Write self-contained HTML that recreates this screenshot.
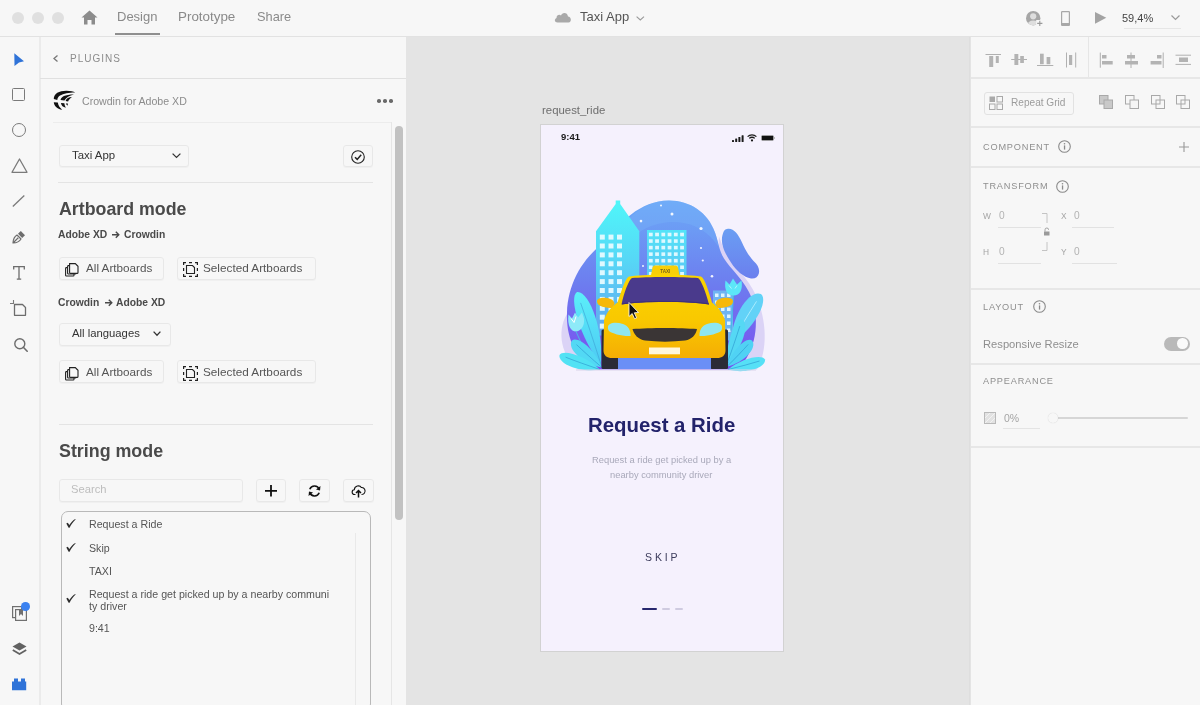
<!DOCTYPE html>
<html><head><meta charset="utf-8"><title>Adobe XD - Taxi App</title>
<style>
html,body{margin:0;padding:0;width:1200px;height:705px;overflow:hidden;background:#f5f5f5;}
body{position:relative;font-family:"Liberation Sans",sans-serif;}
.t{position:absolute;white-space:nowrap;}
body>*{will-change:transform}
svg{overflow:visible}
</style></head><body>
<div style="position:absolute;left:0px;top:0px;width:1200px;height:36px;background:#f7f7f7"></div>
<div style="position:absolute;left:0px;top:36px;width:1200px;height:1px;background:#e2e2e2"></div>
<div style="position:absolute;left:0px;top:37px;width:40px;height:668px;background:#f7f7f7"></div>
<div style="position:absolute;left:39px;top:37px;width:2px;height:668px;background:#ebebeb"></div>
<div style="position:absolute;left:41px;top:37px;width:365px;height:668px;background:#f7f7f7"></div>
<div style="position:absolute;left:406px;top:37px;width:565px;height:668px;background:#e4e4e4"></div>
<div style="position:absolute;left:969px;top:37px;width:1px;height:668px;background:#dedede"></div>
<div style="position:absolute;left:971px;top:37px;width:229px;height:668px;background:#f7f7f7"></div>
<div style="position:absolute;left:12px;top:12px;width:12px;height:12px;border-radius:50%;background:#e0e0e0"></div>
<div style="position:absolute;left:31.5px;top:12px;width:12px;height:12px;border-radius:50%;background:#e0e0e0"></div>
<div style="position:absolute;left:51.5px;top:12px;width:12px;height:12px;border-radius:50%;background:#e0e0e0"></div>
<svg style="position:absolute;left:81px;top:10px;" width="17" height="15" viewBox="0 0 17 15"><path d="M8.5 0.5 L16.5 7.5 L14 7.5 L14 14.5 L10.5 14.5 L10.5 10 L6.5 10 L6.5 14.5 L3 14.5 L3 7.5 L0.5 7.5 Z" fill="#8c8c8c"/></svg>
<div class="t" style="left:117px;top:9.73px;font-size:13px;line-height:14.94px;color:#8a8a8a;font-weight:normal;letter-spacing:0px;">Design</div>
<div style="position:absolute;left:115px;top:33px;width:45px;height:2px;background:#8f8f8f"></div>
<div class="t" style="left:177.5px;top:9.36px;font-size:13.4px;line-height:15.40px;color:#8a8a8a;font-weight:normal;letter-spacing:0px;">Prototype</div>
<div class="t" style="left:256.5px;top:9.91px;font-size:12.8px;line-height:14.71px;color:#8a8a8a;font-weight:normal;letter-spacing:0px;">Share</div>
<svg style="position:absolute;left:554px;top:12px;" width="18" height="11" viewBox="0 0 18 11"><path d="M3.5 10.5 C0.5 10.5 0 7 2.5 6 C2.5 3 5.5 2 7 3.5 C8 0 13.5 0 14 4.5 C17.5 4.5 18 10.5 14.5 10.5 Z" fill="#a9a9a9"/></svg>
<div class="t" style="left:580px;top:9.53px;font-size:13px;line-height:14.94px;color:#555555;font-weight:normal;letter-spacing:0px;">Taxi App</div>
<svg style="position:absolute;left:636px;top:15.8px;" width="9" height="5" viewBox="0 0 9 5"><path d="M0.6 0.6 L4.3 4 L8 0.6" fill="none" stroke="#9a9a9a" stroke-width="1.1"/></svg>
<svg style="position:absolute;left:1020px;top:5px" width="30" height="25" viewBox="1020 5 30 25"><defs><clipPath id="cu"><circle cx="1033.2" cy="18.2" r="7.2"/></clipPath></defs><circle cx="1033.2" cy="18.2" r="7.2" fill="#a6a6a6"/><g clip-path="url(#cu)" fill="#dedede"><circle cx="1033.2" cy="16.3" r="3.1"/><ellipse cx="1033.2" cy="25.2" rx="6" ry="4.6"/></g><rect x="1036.2" y="20" width="7" height="7" fill="#f7f7f7"/><path d="M1039.8 20.8 V26 M1037.2 23.4 H1042.4" stroke="#9a9a9a" stroke-width="1.1"/></svg>
<svg style="position:absolute;left:1061px;top:10.5px;" width="9" height="15" viewBox="0 0 9 15"><rect x="0.6" y="0.6" width="7.8" height="13.8" rx="0.6" fill="none" stroke="#a8a8a8" stroke-width="1.2"/><rect x="0.6" y="12" width="7.8" height="2.4" fill="#a8a8a8"/></svg>
<svg style="position:absolute;left:1095px;top:12px;" width="12" height="12" viewBox="0 0 12 12"><path d="M0 0 L11.3 5.85 L0 11.7 Z" fill="#a3a3a3"/></svg>
<div class="t" style="left:1122px;top:11.57px;font-size:11px;line-height:12.64px;color:#444444;font-weight:normal;letter-spacing:0px;">59,4%</div>
<svg style="position:absolute;left:1171px;top:15px;" width="9" height="5" viewBox="0 0 9 5"><path d="M0.5 0.5 L4.5 4.5 L8.5 0.5" fill="none" stroke="#9a9a9a" stroke-width="1.2"/></svg>
<div style="position:absolute;left:1124px;top:28px;width:57px;height:1px;background:#e6e6e6"></div>
<svg style="position:absolute;left:14px;top:52.5px;" width="11" height="14" viewBox="0 0 11 14"><path d="M0.3 0.3 L10 8.3 L5 9.5 L0.5 13 Z" fill="#2f73d8"/></svg>
<div style="position:absolute;left:12px;top:88px;width:13px;height:13px;box-sizing:border-box;border:1.3px solid #7a7a7a;border-radius:1.5px"></div>
<div style="position:absolute;left:11.5px;top:123px;width:14px;height:14px;box-sizing:border-box;border:1.3px solid #7a7a7a;border-radius:50%"></div>
<svg style="position:absolute;left:11px;top:158px;" width="17" height="15" viewBox="0 0 17 15"><path d="M8.5 1 L16 14.3 L1 14.3 Z" fill="none" stroke="#7a7a7a" stroke-width="1.3" stroke-linejoin="round"/></svg>
<svg style="position:absolute;left:12px;top:195px;" width="13" height="12" viewBox="0 0 13 12"><path d="M0.8 11.5 L12.3 0.5" stroke="#7a7a7a" stroke-width="1.3"/></svg>
<svg style="position:absolute;left:12px;top:229.5px;" width="14" height="14" viewBox="0 0 14 14"><path d="M1 13 C1.2 9 2.5 6.5 5 5 L9 9 C7.5 11.5 5 12.8 1 13 Z M1 13 L5 9" fill="none" stroke="#6d6d6d" stroke-width="1.2" stroke-linejoin="round"/><path d="M6 3.8 L8.8 1 L13 5.2 L10.2 8 Z" fill="#6d6d6d"/><circle cx="5.6" cy="8.4" r="0.9" fill="#6d6d6d"/></svg>
<svg style="position:absolute;left:13px;top:265.5px;" width="12" height="14" viewBox="0 0 12 14"><path d="M0.7 3.5 V0.7 H11.3 V3.5 M6 0.7 V13.2 M3.8 13.2 H8.2" fill="none" stroke="#6d6d6d" stroke-width="1.3"/></svg>
<svg style="position:absolute;left:10px;top:300px;" width="17" height="16" viewBox="0 0 17 16"><path d="M0 3.5 H4 M3.5 0 V4" stroke="#7a7a7a" stroke-width="1.1"/><path d="M4.5 4.5 H12.5 L15.5 7.5 V15.3 H4.5 Z" fill="none" stroke="#6d6d6d" stroke-width="1.3" stroke-linejoin="round"/></svg>
<svg style="position:absolute;left:13.5px;top:337.5px;" width="14" height="14" viewBox="0 0 14 14"><circle cx="5.8" cy="5.8" r="5" fill="none" stroke="#6d6d6d" stroke-width="1.4"/><path d="M9.3 9.3 L13.2 13.2" stroke="#6d6d6d" stroke-width="1.6" stroke-linecap="round"/></svg>
<svg style="position:absolute;left:11.5px;top:605px;" width="16" height="16" viewBox="0 0 16 16"><rect x="0.6" y="1.6" width="9" height="11" fill="none" stroke="#707070" stroke-width="1.2"/><rect x="3.6" y="4.6" width="10.8" height="10.8" fill="#f7f7f7" stroke="#707070" stroke-width="1.2"/><path d="M7 5 V11 L9 9 L11 11 V5 Z" fill="#707070"/></svg>
<div style="position:absolute;left:21.2px;top:602px;width:8.8px;height:8.8px;border-radius:50%;background:#3b82f0"></div>
<svg style="position:absolute;left:11.5px;top:641.5px;" width="15" height="14" viewBox="0 0 15 14"><path d="M7.5 0.5 L14.5 4.5 L7.5 8.5 L0.5 4.5 Z" fill="#626262"/><path d="M0.8 8 L7.5 12 L14.2 8" fill="none" stroke="#626262" stroke-width="1.8"/></svg>
<svg style="position:absolute;left:11.5px;top:677.5px;" width="15" height="13" viewBox="0 0 15 13"><path d="M0 3.5 H2 V0.5 H6 V3.5 H9 V0.5 H13 V3.5 H14.2 V12.3 H0 Z" fill="#2f73d8"/></svg>
<svg style="position:absolute;left:52.5px;top:55px;" width="5" height="7" viewBox="0 0 5 7"><path d="M4.5 0.5 L1 3.5 L4.5 6.5" fill="none" stroke="#777" stroke-width="1.3"/></svg>
<div class="t" style="left:69.5px;top:53.29px;font-size:10px;line-height:11.49px;color:#8c8c8c;font-weight:normal;letter-spacing:1.0px;">PLUGINS</div>
<div style="position:absolute;left:40px;top:78px;width:366px;height:1px;background:#e0e0e0"></div>
<svg style="position:absolute;left:0;top:0" width="80" height="112" viewBox="0 0 80 112"><g fill="#111"><path d="M53.8 99 C53.6 93.5 59.5 90.6 66.5 90.7 C70.5 90.8 73.5 91.4 75.2 92.4 C70 92.3 63.5 93.2 60 95.6 C58 97 57.4 98.6 57.3 100 Z"/><path d="M53.8 102.2 C54 105.8 57 108.8 62.2 109.8 C60.2 108.2 58.2 105.6 57.8 102.6 Z"/><path d="M60.6 100 C60.8 96.8 64.8 94.4 74 94.4 C69.2 95.6 66.2 97.2 64.4 100.5 Z"/><path d="M60.9 103.1 C61.4 105.8 63 107.3 65.9 107.7 C64.9 106.2 64.5 104.6 64.4 103.3 Z"/><path d="M65.6 101.1 C66.3 98.6 68.8 97.2 72 97.1 C70.1 98.5 68.6 99.9 68.1 101.6 Z"/><path d="M65.9 103.6 C66.2 104.7 66.9 105.4 67.9 105.6 C67.7 104.9 67.7 104.1 67.9 103.6 Z"/></g></svg>
<div class="t" style="left:81.5px;top:95.04px;font-size:10.6px;line-height:12.18px;color:#8c8c8c;font-weight:normal;letter-spacing:0px;">Crowdin for Adobe XD</div>
<div style="position:absolute;left:377.2px;top:99px;width:3.6px;height:3.6px;border-radius:50%;background:#6a6a6a"></div>
<div style="position:absolute;left:383.2px;top:99px;width:3.6px;height:3.6px;border-radius:50%;background:#6a6a6a"></div>
<div style="position:absolute;left:389.2px;top:99px;width:3.6px;height:3.6px;border-radius:50%;background:#6a6a6a"></div>
<div style="position:absolute;left:53px;top:122px;width:338px;height:1px;background:#ececec"></div>
<div style="position:absolute;left:391px;top:122px;width:1px;height:583px;background:#e6e6e6"></div>
<div style="position:absolute;left:395px;top:126px;width:8px;height:394px;background:#c2c2c2;border-radius:4px"></div>
<div style="position:absolute;left:59px;top:144.5px;width:130px;height:22px;box-sizing:border-box;border:1px solid #e8e8e8;border-radius:3px;background:#f7f7f7;box-shadow:0 1px 1px rgba(0,0,0,0.03)"></div>
<div class="t" style="left:72px;top:149.00px;font-size:11.4px;line-height:13.10px;color:#333333;font-weight:normal;letter-spacing:0px;">Taxi App</div>
<svg style="position:absolute;left:172px;top:152.5px;" width="9" height="5" viewBox="0 0 9 5"><path d="M0.6 0.6 L4.5 4.4 L8.4 0.6" fill="none" stroke="#333" stroke-width="1.3"/></svg>
<div style="position:absolute;left:342.5px;top:144.5px;width:30px;height:22px;box-sizing:border-box;border:1px solid #e8e8e8;border-radius:3px;background:#f7f7f7;box-shadow:0 1px 1px rgba(0,0,0,0.03)"></div>
<svg style="position:absolute;left:350.5px;top:149.5px;" width="14" height="14" viewBox="0 0 14 14"><circle cx="7" cy="7" r="6.3" fill="none" stroke="#222" stroke-width="1.1"/><path d="M4 7.2 L6.2 9.4 L10.2 4.8" fill="none" stroke="#222" stroke-width="1.5"/></svg>
<div style="position:absolute;left:58px;top:182px;width:315px;height:1px;background:#e4e4e4"></div>
<div class="t" style="left:59px;top:198.61px;font-size:17.8px;line-height:20.45px;color:#4a4a4a;font-weight:bold;letter-spacing:0px;">Artboard mode</div>
<div class="t" style="left:58.3px;top:229.01px;font-size:10.3px;line-height:11.83px;color:#4a4a4a;font-weight:bold;letter-spacing:0px;">Adobe XD</div>
<svg style="position:absolute;left:112px;top:231px;" width="8" height="8" viewBox="0 0 8 8"><path d="M0 3.8 H6.8 M3.8 0.8 L6.8 3.8 L3.8 6.8" fill="none" stroke="#4a4a4a" stroke-width="1.4"/></svg>
<div class="t" style="left:123.7px;top:229.01px;font-size:10.3px;line-height:11.83px;color:#4a4a4a;font-weight:bold;letter-spacing:0px;">Crowdin</div>
<div style="position:absolute;left:59px;top:256.5px;width:105px;height:23px;box-sizing:border-box;border:1px solid #e8e8e8;border-radius:3px;background:#f7f7f7;box-shadow:0 1px 1px rgba(0,0,0,0.03)"></div>
<svg style="position:absolute;left:65px;top:263.0px;" width="14" height="14" viewBox="0 0 14 14"><rect x="0.6" y="4.6" width="8.4" height="8.4" rx="0.8" fill="#f7f7f7" stroke="#222" stroke-width="1.1"/><rect x="2.6" y="2.6" width="8.4" height="8.4" rx="0.8" fill="#f7f7f7" stroke="#222" stroke-width="1.1"/><path d="M4.6 0.6 H10.3 L13 3.3 V9.4 C13 10 12.6 10.4 12 10.4 H5.4 C4.9 10.4 4.6 10 4.6 9.5 Z" fill="#f7f7f7" stroke="#222" stroke-width="1.1"/></svg>
<div class="t" style="left:85.9px;top:260.92px;font-size:11.7px;line-height:13.44px;color:#555555;font-weight:normal;letter-spacing:0px;">All Artboards</div>
<div style="position:absolute;left:176.5px;top:256.5px;width:139px;height:23px;box-sizing:border-box;border:1px solid #e8e8e8;border-radius:3px;background:#f7f7f7;box-shadow:0 1px 1px rgba(0,0,0,0.03)"></div>
<svg style="position:absolute;left:183px;top:262.0px;" width="15" height="15" viewBox="0 0 15 15"><path d="M0.6 3 V0.6 H3 M12 0.6 H14.4 V3 M14.4 12 V14.4 H12 M3 14.4 H0.6 V12 M6 0.6 H9 M0.6 6 V9 M14.4 6 V9 M6 14.4 H9" fill="none" stroke="#222" stroke-width="1.2"/><path d="M3.5 3.5 H9.5 L11.5 5.5 V11.5 H3.5 Z" fill="none" stroke="#222" stroke-width="1.1"/></svg>
<div class="t" style="left:203.4px;top:260.88px;font-size:11.75px;line-height:13.50px;color:#555555;font-weight:normal;letter-spacing:0px;">Selected Artboards</div>
<div class="t" style="left:58.3px;top:297.11px;font-size:10.3px;line-height:11.83px;color:#4a4a4a;font-weight:bold;letter-spacing:0px;">Crowdin</div>
<svg style="position:absolute;left:104.5px;top:299px;" width="8" height="8" viewBox="0 0 8 8"><path d="M0 3.8 H6.8 M3.8 0.8 L6.8 3.8 L3.8 6.8" fill="none" stroke="#4a4a4a" stroke-width="1.4"/></svg>
<div class="t" style="left:115.6px;top:297.11px;font-size:10.3px;line-height:11.83px;color:#4a4a4a;font-weight:bold;letter-spacing:0px;">Adobe XD</div>
<div style="position:absolute;left:58.5px;top:322.5px;width:111.5px;height:22.5px;box-sizing:border-box;border:1px solid #e8e8e8;border-radius:3px;background:#f7f7f7;box-shadow:0 1px 1px rgba(0,0,0,0.03)"></div>
<div class="t" style="left:72px;top:326.89px;font-size:11.3px;line-height:12.98px;color:#333333;font-weight:normal;letter-spacing:0px;">All languages</div>
<svg style="position:absolute;left:153px;top:330.5px;" width="8" height="5" viewBox="0 0 8 5"><path d="M0.6 0.6 L4 4.2 L7.4 0.6" fill="none" stroke="#333" stroke-width="1.3"/></svg>
<div style="position:absolute;left:59px;top:360.2px;width:105px;height:23px;box-sizing:border-box;border:1px solid #e8e8e8;border-radius:3px;background:#f7f7f7;box-shadow:0 1px 1px rgba(0,0,0,0.03)"></div>
<svg style="position:absolute;left:65px;top:366.7px;" width="14" height="14" viewBox="0 0 14 14"><rect x="0.6" y="4.6" width="8.4" height="8.4" rx="0.8" fill="#f7f7f7" stroke="#222" stroke-width="1.1"/><rect x="2.6" y="2.6" width="8.4" height="8.4" rx="0.8" fill="#f7f7f7" stroke="#222" stroke-width="1.1"/><path d="M4.6 0.6 H10.3 L13 3.3 V9.4 C13 10 12.6 10.4 12 10.4 H5.4 C4.9 10.4 4.6 10 4.6 9.5 Z" fill="#f7f7f7" stroke="#222" stroke-width="1.1"/></svg>
<div class="t" style="left:85.9px;top:364.62px;font-size:11.7px;line-height:13.44px;color:#555555;font-weight:normal;letter-spacing:0px;">All Artboards</div>
<div style="position:absolute;left:176.5px;top:360.2px;width:139px;height:23px;box-sizing:border-box;border:1px solid #e8e8e8;border-radius:3px;background:#f7f7f7;box-shadow:0 1px 1px rgba(0,0,0,0.03)"></div>
<svg style="position:absolute;left:183px;top:365.7px;" width="15" height="15" viewBox="0 0 15 15"><path d="M0.6 3 V0.6 H3 M12 0.6 H14.4 V3 M14.4 12 V14.4 H12 M3 14.4 H0.6 V12 M6 0.6 H9 M0.6 6 V9 M14.4 6 V9 M6 14.4 H9" fill="none" stroke="#222" stroke-width="1.2"/><path d="M3.5 3.5 H9.5 L11.5 5.5 V11.5 H3.5 Z" fill="none" stroke="#222" stroke-width="1.1"/></svg>
<div class="t" style="left:203.4px;top:364.58px;font-size:11.75px;line-height:13.50px;color:#555555;font-weight:normal;letter-spacing:0px;">Selected Artboards</div>
<div style="position:absolute;left:58.5px;top:424px;width:314px;height:1px;background:#e4e4e4"></div>
<div class="t" style="left:58.6px;top:440.56px;font-size:17.85px;line-height:20.51px;color:#4a4a4a;font-weight:bold;letter-spacing:0px;">String mode</div>
<div style="position:absolute;left:58.5px;top:478.5px;width:184px;height:23px;box-sizing:border-box;border:1px solid #e8e8e8;border-radius:3px;background:#f7f7f7;box-shadow:0 1px 1px rgba(0,0,0,0.03)"></div>
<div class="t" style="left:71.3px;top:483.18px;font-size:11.2px;line-height:12.87px;color:#bdbdbd;font-weight:normal;letter-spacing:0px;">Search</div>
<div style="position:absolute;left:256px;top:478.5px;width:30px;height:22.5px;box-sizing:border-box;border:1px solid #e8e8e8;border-radius:3px;background:#f7f7f7;box-shadow:0 1px 1px rgba(0,0,0,0.03)"></div>
<svg style="position:absolute;left:264.5px;top:485px;" width="12" height="12" viewBox="0 0 12 12"><path d="M6 0 V11.5 M0 5.8 H12" stroke="#111" stroke-width="1.8"/></svg>
<div style="position:absolute;left:298.5px;top:478.5px;width:30.5px;height:22.5px;box-sizing:border-box;border:1px solid #e8e8e8;border-radius:3px;background:#f7f7f7;box-shadow:0 1px 1px rgba(0,0,0,0.03)"></div>
<svg style="position:absolute;left:308px;top:485px;" width="13" height="12" viewBox="0 0 13 12"><path d="M11.2 4.5 A5 5 0 0 0 1.8 4.2" fill="none" stroke="#111" stroke-width="1.6"/><path d="M12.5 1 L12 5.5 L8 4.5 Z" fill="#111"/><path d="M1.8 7.5 A5 5 0 0 0 11.2 7.8" fill="none" stroke="#111" stroke-width="1.6"/><path d="M0.5 11 L1 6.5 L5 7.5 Z" fill="#111"/></svg>
<div style="position:absolute;left:342.5px;top:478.5px;width:30.5px;height:22.5px;box-sizing:border-box;border:1px solid #e8e8e8;border-radius:3px;background:#f7f7f7;box-shadow:0 1px 1px rgba(0,0,0,0.03)"></div>
<svg style="position:absolute;left:350.5px;top:483.5px;" width="15" height="14" viewBox="0 0 15 14"><path d="M4.5 10.5 H3.5 C0.5 10.5 0.3 6 3.3 5.8 C3.5 2 8.5 0.5 10.3 3.5 C13.5 3 15 7 13.5 9 C13 10 12 10.5 10.5 10.5" fill="none" stroke="#111" stroke-width="1.1"/><path d="M7.5 13.5 V6.5 M5 9 L7.5 6.5 L10 9" fill="none" stroke="#111" stroke-width="1.5"/></svg>
<div style="position:absolute;left:61px;top:510.5px;width:310px;height:200px;box-sizing:border-box;border:1.2px solid #b9b9b9;border-radius:7px;background:#f7f7f7"></div>
<div style="position:absolute;left:355px;top:533px;width:1px;height:172px;background:#e9e9e9"></div>
<svg style="position:absolute;left:65.5px;top:519.1px;" width="10" height="9" viewBox="0 0 10 9"><path d="M0.3 4.6 L1.8 3.8 L3.3 6 C5 3.5 7 1.2 9.3 0 L9.6 0.5 C7.3 2.5 5.2 5.5 3.6 8.7 L2.6 8.7 Z" fill="#2e2e2e"/></svg>
<div class="t" style="left:88.5px;top:517.79px;font-size:10.65px;line-height:12.24px;color:#555555;font-weight:normal;letter-spacing:0px;">Request a Ride</div>
<svg style="position:absolute;left:65.5px;top:542.9px;" width="10" height="9" viewBox="0 0 10 9"><path d="M0.3 4.6 L1.8 3.8 L3.3 6 C5 3.5 7 1.2 9.3 0 L9.6 0.5 C7.3 2.5 5.2 5.5 3.6 8.7 L2.6 8.7 Z" fill="#2e2e2e"/></svg>
<div class="t" style="left:88.5px;top:541.59px;font-size:10.65px;line-height:12.24px;color:#555555;font-weight:normal;letter-spacing:0px;">Skip</div>
<div class="t" style="left:88.5px;top:565.09px;font-size:10.65px;line-height:12.24px;color:#555555;font-weight:normal;letter-spacing:0px;">TAXI</div>
<svg style="position:absolute;left:65.5px;top:594.4px;" width="10" height="9" viewBox="0 0 10 9"><path d="M0.3 4.6 L1.8 3.8 L3.3 6 C5 3.5 7 1.2 9.3 0 L9.6 0.5 C7.3 2.5 5.2 5.5 3.6 8.7 L2.6 8.7 Z" fill="#2e2e2e"/></svg>
<div class="t" style="left:88.5px;top:588.09px;font-size:10.65px;line-height:12.24px;color:#555555;font-weight:normal;letter-spacing:0px;">Request a ride get picked up by a nearby communi</div>
<div class="t" style="left:88.5px;top:599.79px;font-size:10.65px;line-height:12.24px;color:#555555;font-weight:normal;letter-spacing:0px;">ty driver</div>
<div class="t" style="left:88.5px;top:621.99px;font-size:10.65px;line-height:12.24px;color:#555555;font-weight:normal;letter-spacing:0px;">9:41</div>
<div class="t" style="left:541.8px;top:103.80px;font-size:11.4px;line-height:13.10px;color:#6e6e6e;font-weight:normal;letter-spacing:0px;">request_ride</div>
<div style="position:absolute;left:540px;top:123.5px;width:244px;height:528px;background:#d2d2d2"></div>
<div style="position:absolute;left:541px;top:124.5px;width:242px;height:526px;background:#f5f1fd"></div>
<div class="t" style="left:561px;top:132.25px;font-size:9.5px;line-height:10.92px;color:#1a1a1a;font-weight:bold;letter-spacing:0px;">9:41</div>
<svg style="position:absolute;left:731.5px;top:134.5px;" width="12" height="7" viewBox="0 0 12 7"><rect x="0" y="5" width="2" height="2" rx="0.5" fill="#1a1a1a"/><rect x="3.2" y="3.5" width="2" height="3.5" rx="0.5" fill="#1a1a1a"/><rect x="6.4" y="2" width="2" height="5" rx="0.5" fill="#1a1a1a"/><rect x="9.6" y="0.3" width="2" height="6.7" rx="0.5" fill="#1a1a1a"/></svg>
<svg style="position:absolute;left:746.5px;top:134.3px;" width="10" height="7.5" viewBox="0 0 10 7.5"><path d="M0.6 2.6 A6.3 6.3 0 0 1 9.4 2.6" fill="none" stroke="#1a1a1a" stroke-width="1.3"/><path d="M2.3 4.4 A3.8 3.8 0 0 1 7.7 4.4" fill="none" stroke="#1a1a1a" stroke-width="1.3"/><circle cx="5" cy="6.4" r="1.1" fill="#1a1a1a"/></svg>
<svg style="position:absolute;left:760.5px;top:135px;" width="14" height="6" viewBox="0 0 14 6"><rect x="0.5" y="0.5" width="12" height="5" rx="1" fill="#111" stroke="#bbb" stroke-width="0.5"/><rect x="13" y="2" width="1" height="2" fill="#bbb"/></svg>
<div class="t" style="left:588px;top:413.81px;font-size:20.4px;line-height:23.44px;color:#23236b;font-weight:bold;letter-spacing:0px;">Request a Ride</div>
<div class="t" style="left:591.6px;top:454.99px;font-size:9.35px;line-height:10.74px;color:#a9a9ba;font-weight:normal;letter-spacing:0px;">Request a ride get picked up by a</div>
<div class="t" style="left:610px;top:469.89px;font-size:9.35px;line-height:10.74px;color:#a9a9ba;font-weight:normal;letter-spacing:0px;">nearby community driver</div>
<div class="t" style="left:645.2px;top:551.03px;font-size:10.5px;line-height:12.06px;color:#3c3c5c;font-weight:normal;letter-spacing:2.9px;">SKIP</div>
<div style="position:absolute;left:641.5px;top:608px;width:15px;height:2.2px;background:#27276e;border-radius:1px"></div>
<div style="position:absolute;left:662px;top:608px;width:8px;height:2.2px;background:#cfcbe0;border-radius:1px"></div>
<div style="position:absolute;left:675px;top:608px;width:8px;height:2.2px;background:#cfcbe0;border-radius:1px"></div>
<div style="position:absolute;left:1088px;top:37px;width:1px;height:40px;background:#e6e6e6"></div>
<div style="position:absolute;left:971px;top:77px;width:229px;height:1.5px;background:#e7e7e7"></div>
<svg style="position:absolute;left:0;top:0" width="1200" height="80" viewBox="0 0 1200 80"><path d="M985.5 54.5 H1001" stroke="#b0b0b0" stroke-width="1"/><rect x="989.2" y="56" width="4" height="11" fill="#b3b3b3"/><rect x="995.8" y="56" width="3" height="7" fill="#b3b3b3"/>
<path d="M1011.2 59.5 H1027" stroke="#b0b0b0" stroke-width="1"/><rect x="1014.4" y="54" width="3.9" height="11" fill="#b3b3b3"/><rect x="1020.2" y="56" width="3.7" height="7" fill="#b3b3b3"/>
<path d="M1037 65.5 H1053.3" stroke="#b0b0b0" stroke-width="1"/><rect x="1040" y="53.7" width="3.7" height="10.5" fill="#b3b3b3"/><rect x="1046.6" y="57" width="3.7" height="7.2" fill="#b3b3b3"/>
<path d="M1066.5 52.5 V67.5 M1075.7 52.5 V67.5" stroke="#b0b0b0" stroke-width="1"/><rect x="1069" y="55" width="3.2" height="10" fill="#b3b3b3"/>
<path d="M1100.3 52.6 V67.7" stroke="#b0b0b0" stroke-width="1"/><rect x="1102" y="55" width="4.5" height="3.5" fill="#b3b3b3"/><rect x="1102" y="61" width="10.7" height="3.5" fill="#b3b3b3"/>
<path d="M1131 52.5 V68" stroke="#b0b0b0" stroke-width="1"/><rect x="1127" y="55" width="8" height="3.5" fill="#b3b3b3"/><rect x="1125" y="61" width="13" height="3.5" fill="#b3b3b3"/>
<path d="M1163.2 52.5 V68" stroke="#b0b0b0" stroke-width="1"/><rect x="1157" y="55" width="4.5" height="3.5" fill="#b3b3b3"/><rect x="1150.6" y="61" width="10.9" height="3.5" fill="#b3b3b3"/>
<path d="M1175.5 55.2 H1191 M1175.5 64.4 H1191" stroke="#b0b0b0" stroke-width="1"/><rect x="1179" y="57.5" width="9" height="4.5" fill="#b3b3b3"/></svg>
<div style="position:absolute;left:983.5px;top:91.5px;width:90px;height:23px;box-sizing:border-box;border:1px solid #e2e2e2;border-radius:3px"></div>
<svg style="position:absolute;left:989px;top:96px;" width="14" height="14" viewBox="0 0 14 14"><rect x="0.5" y="0.5" width="5.5" height="5.5" fill="#a9a9a9"/><rect x="8" y="0.5" width="5.5" height="5.5" fill="none" stroke="#a9a9a9" stroke-width="1"/><rect x="0.5" y="8" width="5.5" height="5.5" fill="none" stroke="#a9a9a9" stroke-width="1"/><rect x="8" y="8" width="5.5" height="5.5" fill="none" stroke="#a9a9a9" stroke-width="1"/></svg>
<div class="t" style="left:1011.3px;top:96.60px;font-size:10.1px;line-height:11.60px;color:#9c9c9c;font-weight:normal;letter-spacing:0px;">Repeat Grid</div>
<svg style="position:absolute;left:1099px;top:94.5px;" width="14" height="14" viewBox="0 0 14 14"><rect x="0.5" y="0.5" width="8.5" height="8.5" fill="#c9c9c9" stroke="#a9a9a9" stroke-width="1"/><rect x="5" y="5" width="8.5" height="8.5" fill="#c9c9c9" stroke="#a9a9a9" stroke-width="1"/></svg>
<svg style="position:absolute;left:1125px;top:94.5px;" width="14" height="14" viewBox="0 0 14 14"><rect x="0.5" y="0.5" width="8.5" height="8.5" fill="none" stroke="#a9a9a9" stroke-width="1"/><rect x="5" y="5" width="8.5" height="8.5" fill="#f5f5f5" stroke="#a9a9a9" stroke-width="1"/></svg>
<svg style="position:absolute;left:1151px;top:94.5px;" width="14" height="14" viewBox="0 0 14 14"><rect x="0.5" y="0.5" width="8.5" height="8.5" fill="none" stroke="#a9a9a9" stroke-width="1"/><rect x="5" y="5" width="8.5" height="8.5" fill="none" stroke="#a9a9a9" stroke-width="1"/></svg>
<svg style="position:absolute;left:1176px;top:94.5px;" width="14" height="14" viewBox="0 0 14 14"><rect x="0.5" y="0.5" width="8.5" height="8.5" fill="none" stroke="#a9a9a9" stroke-width="1"/><rect x="5" y="5" width="8.5" height="8.5" fill="none" stroke="#a9a9a9" stroke-width="1"/></svg>
<div style="position:absolute;left:971px;top:126px;width:229px;height:1.5px;background:#e7e7e7"></div>
<div class="t" style="left:983px;top:141.83px;font-size:9.2px;line-height:10.57px;color:#8f8f8f;font-weight:normal;letter-spacing:0.8px;">COMPONENT</div>
<svg style="position:absolute;left:1058.0px;top:140.0px;" width="13" height="13" viewBox="0 0 13 13"><circle cx="6.5" cy="6.5" r="5.8" fill="none" stroke="#8a8a8a" stroke-width="1.1"/><rect x="5.9" y="5.4" width="1.3" height="4.2" fill="#8a8a8a"/><circle cx="6.5" cy="3.7" r="0.8" fill="#8a8a8a"/></svg>
<svg style="position:absolute;left:1179px;top:141.5px;" width="10" height="10" viewBox="0 0 10 10"><path d="M5 0 V10 M0 5 H10" stroke="#9a9a9a" stroke-width="1.1"/></svg>
<div style="position:absolute;left:971px;top:165.5px;width:229px;height:1.5px;background:#e7e7e7"></div>
<div class="t" style="left:983px;top:181.33px;font-size:9.2px;line-height:10.57px;color:#8f8f8f;font-weight:normal;letter-spacing:0.8px;">TRANSFORM</div>
<svg style="position:absolute;left:1056.0px;top:179.5px;" width="13" height="13" viewBox="0 0 13 13"><circle cx="6.5" cy="6.5" r="5.8" fill="none" stroke="#8a8a8a" stroke-width="1.1"/><rect x="5.9" y="5.4" width="1.3" height="4.2" fill="#8a8a8a"/><circle cx="6.5" cy="3.7" r="0.8" fill="#8a8a8a"/></svg>
<div class="t" style="left:982.8px;top:211.86px;font-size:8.4px;line-height:9.65px;color:#a5a5a5;font-weight:normal;letter-spacing:0px;">W</div>
<div class="t" style="left:999px;top:210.41px;font-size:10.2px;line-height:11.72px;color:#b3b3b3;font-weight:normal;letter-spacing:0px;">0</div>
<div style="position:absolute;left:997.5px;top:227px;width:42.5px;height:1px;background:#e2e2e2"></div>
<div class="t" style="left:1060.6px;top:211.86px;font-size:8.4px;line-height:9.65px;color:#a5a5a5;font-weight:normal;letter-spacing:0px;">X</div>
<div class="t" style="left:1073.8px;top:210.41px;font-size:10.2px;line-height:11.72px;color:#b3b3b3;font-weight:normal;letter-spacing:0px;">0</div>
<div style="position:absolute;left:1072px;top:227px;width:42px;height:1px;background:#e2e2e2"></div>
<div class="t" style="left:983px;top:247.86px;font-size:8.4px;line-height:9.65px;color:#a5a5a5;font-weight:normal;letter-spacing:0px;">H</div>
<div class="t" style="left:999px;top:245.81px;font-size:10.2px;line-height:11.72px;color:#b3b3b3;font-weight:normal;letter-spacing:0px;">0</div>
<div style="position:absolute;left:997.5px;top:263px;width:42.5px;height:1px;background:#e2e2e2"></div>
<div class="t" style="left:1060.6px;top:247.86px;font-size:8.4px;line-height:9.65px;color:#a5a5a5;font-weight:normal;letter-spacing:0px;">Y</div>
<div class="t" style="left:1073.8px;top:245.81px;font-size:10.2px;line-height:11.72px;color:#b3b3b3;font-weight:normal;letter-spacing:0px;">0</div>
<div style="position:absolute;left:1072px;top:263px;width:45px;height:1px;background:#e2e2e2"></div>
<svg style="position:absolute;left:1042px;top:213px;" width="7" height="40" viewBox="0 0 7 40"><path d="M0 0.5 H5 V10" fill="none" stroke="#bdbdbd" stroke-width="0.9"/><path d="M0 37.5 H5 V29" fill="none" stroke="#bdbdbd" stroke-width="0.9"/><path d="M3 18.5 V16.8 A1.8 1.8 0 0 1 6.6 16.8" fill="none" stroke="#9a9a9a" stroke-width="0.9"/><rect x="2" y="18.5" width="5.5" height="4" fill="#9a9a9a"/></svg>
<div style="position:absolute;left:971px;top:287.5px;width:229px;height:1.5px;background:#e7e7e7"></div>
<div class="t" style="left:983px;top:301.63px;font-size:9.2px;line-height:10.57px;color:#8f8f8f;font-weight:normal;letter-spacing:0.8px;">LAYOUT</div>
<svg style="position:absolute;left:1032.5px;top:300.3px;" width="13" height="13" viewBox="0 0 13 13"><circle cx="6.5" cy="6.5" r="5.8" fill="none" stroke="#8a8a8a" stroke-width="1.1"/><rect x="5.9" y="5.4" width="1.3" height="4.2" fill="#8a8a8a"/><circle cx="6.5" cy="3.7" r="0.8" fill="#8a8a8a"/></svg>
<div class="t" style="left:983px;top:337.88px;font-size:11.2px;line-height:12.87px;color:#8f8f8f;font-weight:normal;letter-spacing:0px;">Responsive Resize</div>
<div style="position:absolute;left:1163.5px;top:336.5px;width:25.5px;height:13.5px;background:#b9b9b9;border-radius:7px"></div>
<div style="position:absolute;left:1176.5px;top:338px;width:10.5px;height:10.5px;border-radius:50%;background:#fafafa"></div>
<div style="position:absolute;left:971px;top:362.5px;width:229px;height:1.5px;background:#e7e7e7"></div>
<div class="t" style="left:983px;top:375.73px;font-size:9.2px;line-height:10.57px;color:#8f8f8f;font-weight:normal;letter-spacing:0.8px;">APPEARANCE</div>
<svg style="position:absolute;left:983.5px;top:411.5px;" width="12" height="12" viewBox="0 0 12 12"><rect x="0.5" y="0.5" width="11" height="11" fill="#e2e2e2" stroke="#b9b9b9" stroke-width="1"/><path d="M1 11 L11 1 M1 6 L6 1 M6 11 L11 6" stroke="#f2f2f2" stroke-width="1"/></svg>
<div class="t" style="left:1003.7px;top:412.33px;font-size:10.5px;line-height:12.06px;color:#a5a5a5;font-weight:normal;letter-spacing:0px;">0%</div>
<div style="position:absolute;left:1003px;top:428px;width:37px;height:1px;background:#e4e4e4"></div>
<div style="position:absolute;left:1057px;top:417px;width:131px;height:2px;background:#d6d6d6;border-radius:1px"></div>
<div style="position:absolute;left:1048px;top:412.5px;width:10px;height:10px;border-radius:50%;background:#f7f7f7;box-shadow:0 0 1px rgba(0,0,0,0.2)"></div>
<div style="position:absolute;left:971px;top:445.5px;width:229px;height:1.5px;background:#e7e7e7"></div>
<svg style="position:absolute;left:541px;top:124.5px" width="242" height="526" viewBox="541 124.5 242 526"><defs>
<linearGradient id="gBlob" x1="0" y1="200" x2="0" y2="370" gradientUnits="userSpaceOnUse"><stop offset="0" stop-color="#6caaf7"/><stop offset="0.5" stop-color="#6d7cef"/><stop offset="1" stop-color="#7c4bf0"/></linearGradient>
<linearGradient id="gBean" x1="0" y1="228" x2="0" y2="278" gradientUnits="userSpaceOnUse"><stop offset="0" stop-color="#6a9ef3"/><stop offset="1" stop-color="#6b7fee"/></linearGradient>
<linearGradient id="gB1" x1="0" y1="200" x2="0" y2="330" gradientUnits="userSpaceOnUse"><stop offset="0" stop-color="#4ff6f9"/><stop offset="0.45" stop-color="#56d8f6"/><stop offset="1" stop-color="#62a8ef"/></linearGradient>
<linearGradient id="gB2" x1="0" y1="229" x2="0" y2="300" gradientUnits="userSpaceOnUse"><stop offset="0" stop-color="#53e4f8"/><stop offset="1" stop-color="#5fb8f1"/></linearGradient>
<linearGradient id="gCar" x1="0" y1="275" x2="0" y2="357" gradientUnits="userSpaceOnUse"><stop offset="0" stop-color="#fbd500"/><stop offset="0.55" stop-color="#f9c800"/><stop offset="1" stop-color="#f5ae04"/></linearGradient>
<linearGradient id="gLeaf" x1="0" y1="290" x2="0" y2="370" gradientUnits="userSpaceOnUse"><stop offset="0" stop-color="#5cf0fa"/><stop offset="1" stop-color="#4cc6f3"/></linearGradient>
</defs><path d="M568 312 C558 326 558 352 578 369 L757 369 C768 350 767 320 756 295 C748 278 735 266 727 254 C723 248 721 241 719 236 C717 250 722 262 732 274 C740 284 746 292 748 300 Z" fill="#dbd3f6"/><path d="M669 200 C690 200 708 212 715 232 C719 243 719 250 724 258 C730 268 745 280 752 298 C760 322 756 350 738 369 L592 369 C574 355 566 335 567 312 C568 285 580 262 600 245 C620 222 640 200 669 200 Z" fill="url(#gBlob)"/><path d="M669 200 C690 200 708 212 715 232 C717 238 718 243 719 247 C712 236 700 224 680 222 C662 220 648 226 639 232 L625 222 C638 208 652 200 669 200 Z" fill="#76b0f8" opacity="0.45"/><path d="M727 228.5 C733 227 738 233 742 242 C746 251 750 257 756 263 C762 270 759 279 751 278 C744 277 736 270 731 262 C726 254 721 246 722 237 C723 232 724 229 727 228.5 Z" fill="url(#gBean)"/><circle cx="641" cy="220.6" r="1.3" fill="#ffffff" opacity="0.9"/><circle cx="643" cy="265.5" r="1.0" fill="#ffffff" opacity="0.9"/><circle cx="672" cy="213.5" r="1.5" fill="#ffffff" opacity="0.9"/><circle cx="701" cy="228" r="1.6" fill="#ffffff" opacity="0.9"/><circle cx="701" cy="247.5" r="1.1" fill="#ffffff" opacity="0.9"/><circle cx="702.8" cy="260" r="1.1" fill="#ffffff" opacity="0.9"/><circle cx="712" cy="275.7" r="1.3" fill="#ffffff" opacity="0.9"/><circle cx="661" cy="205" r="1.0" fill="#ffffff" opacity="0.9"/><circle cx="580" cy="300" r="1.3" fill="#ffffff" opacity="0.9"/><rect x="647" y="229.5" width="39.5" height="75" fill="url(#gB2)"/><rect x="648.90" y="232.20" width="3.8" height="3.6" fill="#e9fbff" opacity="0.92"/><rect x="648.90" y="238.75" width="3.8" height="3.6" fill="#e9fbff" opacity="0.92"/><rect x="648.90" y="245.30" width="3.8" height="3.6" fill="#e9fbff" opacity="0.92"/><rect x="648.90" y="251.85" width="3.8" height="3.6" fill="#e9fbff" opacity="0.92"/><rect x="648.90" y="258.40" width="3.8" height="3.6" fill="#e9fbff" opacity="0.92"/><rect x="648.90" y="264.95" width="3.8" height="3.6" fill="#e9fbff" opacity="0.92"/><rect x="648.90" y="271.50" width="3.8" height="3.6" fill="#e9fbff" opacity="0.92"/><rect x="655.15" y="232.20" width="3.8" height="3.6" fill="#e9fbff" opacity="0.92"/><rect x="655.15" y="238.75" width="3.8" height="3.6" fill="#e9fbff" opacity="0.92"/><rect x="655.15" y="245.30" width="3.8" height="3.6" fill="#e9fbff" opacity="0.92"/><rect x="655.15" y="251.85" width="3.8" height="3.6" fill="#e9fbff" opacity="0.92"/><rect x="655.15" y="258.40" width="3.8" height="3.6" fill="#e9fbff" opacity="0.92"/><rect x="655.15" y="264.95" width="3.8" height="3.6" fill="#e9fbff" opacity="0.92"/><rect x="655.15" y="271.50" width="3.8" height="3.6" fill="#e9fbff" opacity="0.92"/><rect x="661.40" y="232.20" width="3.8" height="3.6" fill="#e9fbff" opacity="0.92"/><rect x="661.40" y="238.75" width="3.8" height="3.6" fill="#e9fbff" opacity="0.92"/><rect x="661.40" y="245.30" width="3.8" height="3.6" fill="#e9fbff" opacity="0.92"/><rect x="661.40" y="251.85" width="3.8" height="3.6" fill="#e9fbff" opacity="0.92"/><rect x="661.40" y="258.40" width="3.8" height="3.6" fill="#e9fbff" opacity="0.92"/><rect x="661.40" y="264.95" width="3.8" height="3.6" fill="#e9fbff" opacity="0.92"/><rect x="661.40" y="271.50" width="3.8" height="3.6" fill="#e9fbff" opacity="0.92"/><rect x="667.65" y="232.20" width="3.8" height="3.6" fill="#e9fbff" opacity="0.92"/><rect x="667.65" y="238.75" width="3.8" height="3.6" fill="#e9fbff" opacity="0.92"/><rect x="667.65" y="245.30" width="3.8" height="3.6" fill="#e9fbff" opacity="0.92"/><rect x="667.65" y="251.85" width="3.8" height="3.6" fill="#e9fbff" opacity="0.92"/><rect x="667.65" y="258.40" width="3.8" height="3.6" fill="#e9fbff" opacity="0.92"/><rect x="667.65" y="264.95" width="3.8" height="3.6" fill="#e9fbff" opacity="0.92"/><rect x="667.65" y="271.50" width="3.8" height="3.6" fill="#e9fbff" opacity="0.92"/><rect x="673.90" y="232.20" width="3.8" height="3.6" fill="#e9fbff" opacity="0.92"/><rect x="673.90" y="238.75" width="3.8" height="3.6" fill="#e9fbff" opacity="0.92"/><rect x="673.90" y="245.30" width="3.8" height="3.6" fill="#e9fbff" opacity="0.92"/><rect x="673.90" y="251.85" width="3.8" height="3.6" fill="#e9fbff" opacity="0.92"/><rect x="673.90" y="258.40" width="3.8" height="3.6" fill="#e9fbff" opacity="0.92"/><rect x="673.90" y="264.95" width="3.8" height="3.6" fill="#e9fbff" opacity="0.92"/><rect x="673.90" y="271.50" width="3.8" height="3.6" fill="#e9fbff" opacity="0.92"/><rect x="680.15" y="232.20" width="3.8" height="3.6" fill="#e9fbff" opacity="0.92"/><rect x="680.15" y="238.75" width="3.8" height="3.6" fill="#e9fbff" opacity="0.92"/><rect x="680.15" y="245.30" width="3.8" height="3.6" fill="#e9fbff" opacity="0.92"/><rect x="680.15" y="251.85" width="3.8" height="3.6" fill="#e9fbff" opacity="0.92"/><rect x="680.15" y="258.40" width="3.8" height="3.6" fill="#e9fbff" opacity="0.92"/><rect x="680.15" y="264.95" width="3.8" height="3.6" fill="#e9fbff" opacity="0.92"/><rect x="680.15" y="271.50" width="3.8" height="3.6" fill="#e9fbff" opacity="0.92"/><rect x="713" y="290" width="20" height="50" fill="#6fb4f2"/><rect x="715.0" y="293.0" width="3.5" height="3.5" fill="#e9fbff" opacity="0.9"/><rect x="715.0" y="300.0" width="3.5" height="3.5" fill="#e9fbff" opacity="0.9"/><rect x="715.0" y="307.0" width="3.5" height="3.5" fill="#e9fbff" opacity="0.9"/><rect x="715.0" y="314.0" width="3.5" height="3.5" fill="#e9fbff" opacity="0.9"/><rect x="715.0" y="321.0" width="3.5" height="3.5" fill="#e9fbff" opacity="0.9"/><rect x="715.0" y="328.0" width="3.5" height="3.5" fill="#e9fbff" opacity="0.9"/><rect x="721.0" y="293.0" width="3.5" height="3.5" fill="#e9fbff" opacity="0.9"/><rect x="721.0" y="300.0" width="3.5" height="3.5" fill="#e9fbff" opacity="0.9"/><rect x="721.0" y="307.0" width="3.5" height="3.5" fill="#e9fbff" opacity="0.9"/><rect x="721.0" y="314.0" width="3.5" height="3.5" fill="#e9fbff" opacity="0.9"/><rect x="721.0" y="321.0" width="3.5" height="3.5" fill="#e9fbff" opacity="0.9"/><rect x="721.0" y="328.0" width="3.5" height="3.5" fill="#e9fbff" opacity="0.9"/><rect x="727.0" y="293.0" width="3.5" height="3.5" fill="#e9fbff" opacity="0.9"/><rect x="727.0" y="300.0" width="3.5" height="3.5" fill="#e9fbff" opacity="0.9"/><rect x="727.0" y="307.0" width="3.5" height="3.5" fill="#e9fbff" opacity="0.9"/><rect x="727.0" y="314.0" width="3.5" height="3.5" fill="#e9fbff" opacity="0.9"/><rect x="727.0" y="321.0" width="3.5" height="3.5" fill="#e9fbff" opacity="0.9"/><rect x="727.0" y="328.0" width="3.5" height="3.5" fill="#e9fbff" opacity="0.9"/><path d="M615.7 200 H620.2 V203.5 L639.3 230.8 V335 H596 V230.8 L615.7 203.5 Z" fill="url(#gB1)"/><rect x="599.8" y="234.1" width="5" height="5" fill="#eafcff" opacity="0.92"/><rect x="599.8" y="243.0" width="5" height="5" fill="#eafcff" opacity="0.92"/><rect x="599.8" y="251.9" width="5" height="5" fill="#eafcff" opacity="0.92"/><rect x="599.8" y="260.8" width="5" height="5" fill="#eafcff" opacity="0.92"/><rect x="599.8" y="269.7" width="5" height="5" fill="#eafcff" opacity="0.92"/><rect x="599.8" y="278.6" width="5" height="5" fill="#eafcff" opacity="0.92"/><rect x="599.8" y="287.5" width="5" height="5" fill="#eafcff" opacity="0.92"/><rect x="599.8" y="296.4" width="5" height="5" fill="#eafcff" opacity="0.92"/><rect x="599.8" y="305.3" width="5" height="5" fill="#eafcff" opacity="0.92"/><rect x="599.8" y="314.2" width="5" height="5" fill="#eafcff" opacity="0.92"/><rect x="599.8" y="323.1" width="5" height="5" fill="#eafcff" opacity="0.92"/><rect x="608.5" y="234.1" width="5" height="5" fill="#eafcff" opacity="0.92"/><rect x="608.5" y="243.0" width="5" height="5" fill="#eafcff" opacity="0.92"/><rect x="608.5" y="251.9" width="5" height="5" fill="#eafcff" opacity="0.92"/><rect x="608.5" y="260.8" width="5" height="5" fill="#eafcff" opacity="0.92"/><rect x="608.5" y="269.7" width="5" height="5" fill="#eafcff" opacity="0.92"/><rect x="608.5" y="278.6" width="5" height="5" fill="#eafcff" opacity="0.92"/><rect x="608.5" y="287.5" width="5" height="5" fill="#eafcff" opacity="0.92"/><rect x="608.5" y="296.4" width="5" height="5" fill="#eafcff" opacity="0.92"/><rect x="608.5" y="305.3" width="5" height="5" fill="#eafcff" opacity="0.92"/><rect x="608.5" y="314.2" width="5" height="5" fill="#eafcff" opacity="0.92"/><rect x="608.5" y="323.1" width="5" height="5" fill="#eafcff" opacity="0.92"/><rect x="617.0" y="234.1" width="5" height="5" fill="#eafcff" opacity="0.92"/><rect x="617.0" y="243.0" width="5" height="5" fill="#eafcff" opacity="0.92"/><rect x="617.0" y="251.9" width="5" height="5" fill="#eafcff" opacity="0.92"/><rect x="617.0" y="260.8" width="5" height="5" fill="#eafcff" opacity="0.92"/><rect x="617.0" y="269.7" width="5" height="5" fill="#eafcff" opacity="0.92"/><rect x="617.0" y="278.6" width="5" height="5" fill="#eafcff" opacity="0.92"/><rect x="617.0" y="287.5" width="5" height="5" fill="#eafcff" opacity="0.92"/><rect x="617.0" y="296.4" width="5" height="5" fill="#eafcff" opacity="0.92"/><rect x="617.0" y="305.3" width="5" height="5" fill="#eafcff" opacity="0.92"/><rect x="617.0" y="314.2" width="5" height="5" fill="#eafcff" opacity="0.92"/><rect x="617.0" y="323.1" width="5" height="5" fill="#eafcff" opacity="0.92"/><path d="M577.0 291.5 C568.1 296.9 580.7 338.5 601.0 364.0 C604.0 330.8 589.3 289.9 577.0 291.5 Z" fill="url(#gLeaf)"/><path d="M580.6 302.4 Q589.5 327.6 601.0 364.0" fill="none" stroke="#3fa8d8" stroke-width="0.7"/><path d="M568.5 314 L572 318 L575 312 L578 317 L582 312 L584 318 C585 326 580 331 576 331 C571 331 567 325 568.5 314 Z" fill="#8eeaf8"/><path d="M571 318 L574 322 L576 316" fill="none" stroke="#ffffff" stroke-width="1"/><path d="M576 331 L590 362" stroke="#4ab8e6" stroke-width="1"/><path d="M572.0 340.0 C566.4 348.0 583.0 364.0 602.0 367.0 C595.7 349.9 578.0 335.1 572.0 340.0 Z" fill="#52d8f4"/><path d="M576.5 344.1 Q586.7 353.9 602.0 367.0" fill="none" stroke="#2f9ed2" stroke-width="0.7"/><path d="M559.5 354.5 C557.7 363.5 580.5 372.5 600.0 369.0 C586.4 355.8 563.1 348.3 559.5 354.5 Z" fill="#52e2f4"/><path d="M565.6 356.7 Q579.6 362.2 600.0 369.0" fill="none" stroke="#2f9ed2" stroke-width="0.7"/><path d="M733.5 294 L731 330" stroke="#4ab8e6" stroke-width="1.2"/><path d="M725.5 280 L729.5 284 L733 278 L737 284 L741.5 280 C743 289 740 295 733.5 295 C727 295 724 289 725.5 280 Z" fill="#5ce6f8"/><path d="M729 285 L731.5 288 M737 285 L735 288" stroke="#c9faff" stroke-width="0.8"/><path d="M761.0 293.5 C749.2 288.4 731.1 316.0 731.0 343.0 C753.2 329.4 769.3 300.6 761.0 293.5 Z" fill="#62d2f7"/><path d="M756.5 300.9 Q745.6 318.0 731.0 343.0" fill="none" stroke="#c8f6ff" stroke-width="0.7"/><path d="M742.0 319.0 C734.9 318.0 725.6 342.9 727.0 363.0 C742.3 348.6 750.1 323.2 742.0 319.0 Z" fill="#55d8f4"/><path d="M739.8 325.6 Q735.0 341.2 727.0 363.0" fill="none" stroke="#2f9ed2" stroke-width="0.7"/><path d="M752.0 340.0 C746.2 335.9 731.3 350.2 727.0 366.0 C744.1 362.4 757.8 347.1 752.0 340.0 Z" fill="#50d2f4"/><path d="M748.2 343.9 Q739.9 353.3 727.0 366.0" fill="none" stroke="#2f9ed2" stroke-width="0.7"/><path d="M765.0 359.0 C762.2 353.1 740.9 358.1 728.0 369.0 C745.2 373.8 766.1 367.4 765.0 359.0 Z" fill="#56e0f6"/><path d="M759.5 360.5 Q746.6 364.5 728.0 369.0" fill="none" stroke="#2f9ed2" stroke-width="0.7"/><rect x="601.5" y="329" width="17.5" height="39.5" rx="1.5" fill="#2b2b36"/><rect x="710.5" y="329" width="17.5" height="39.5" rx="1.5" fill="#2b2b36"/><rect x="618" y="356" width="93" height="12.5" fill="#6a8ff6"/><path d="M651 274.8 L652.5 267 C653 265.5 654 265 655.5 265 H675 C676.5 265 677.5 265.5 678 267 L679.5 274.8 Z" fill="#f8cf08"/><text x="665.3" y="272.3" font-family="Liberation Sans" font-size="4.6" font-weight="bold" text-anchor="middle" fill="#7a6418">TAXI</text><path d="M597 301 C597 297.5 602 297 607 297.5 C611 298 614 300 614.5 303 L613 307.5 C606 307.5 597 306 597 301 Z" fill="#f6b80a"/><path d="M733 301 C733 297.5 728 297 723 297.5 C719 298 716 300 715.5 303 L717 307.5 C724 307.5 733 306 733 301 Z" fill="#f6b80a"/><path d="M629 276 C640 273.5 690 273.5 701 276 C705 278 709 292 712 302 C717 306 723 312 725 320 L725.5 350 C725.5 355 722 357.5 717 357.5 H612 C607 357.5 603.5 355 603.5 350 L604 320 C606 312 612 306 617.5 302 C621 292 625 278 629 276 Z" fill="url(#gCar)"/><path d="M632 277.5 C645 276 685 276 698 277.5 C701 279 706 292 709 304 C690 300.5 640 300.5 621.5 304 C624 292 629 279 632 277.5 Z" fill="#4a3a8c"/><path d="M622 303.5 C640 300 690 300 709 303.5" fill="none" stroke="#3d2f78" stroke-width="1"/><path d="M608 326 C609 322 616 321.5 623 323.5 C628 325 631 330 630.5 335.5 C622 336 612 333 609 330.5 C608 329 607.8 327.5 608 326 Z" fill="#8fe6f0"/><path d="M722 326 C721 322 714 321.5 707 323.5 C702 325 699 330 699.5 335.5 C708 336 718 333 721 330.5 C722 329 722.2 327.5 722 326 Z" fill="#8fe6f0"/><path d="M632.5 328.5 C650 327 680 327 697 328.5 C696 334 692 339 685 340 C672 341.5 658 341.5 645 340 C638 339 634 334 632.5 328.5 Z" fill="#3a3535"/><rect x="649" y="347" width="31" height="6.8" fill="#fff6dc"/><rect x="576" y="369" width="180" height="1" fill="#d9d4ea"/><path d="M629 302 L629 316 L632.2 313 L634.6 318.2 L636.6 317.3 L634.3 312.3 L638.5 312 Z" fill="#111" stroke="#fff" stroke-width="0.8" stroke-linejoin="round"/></svg>
</body></html>
